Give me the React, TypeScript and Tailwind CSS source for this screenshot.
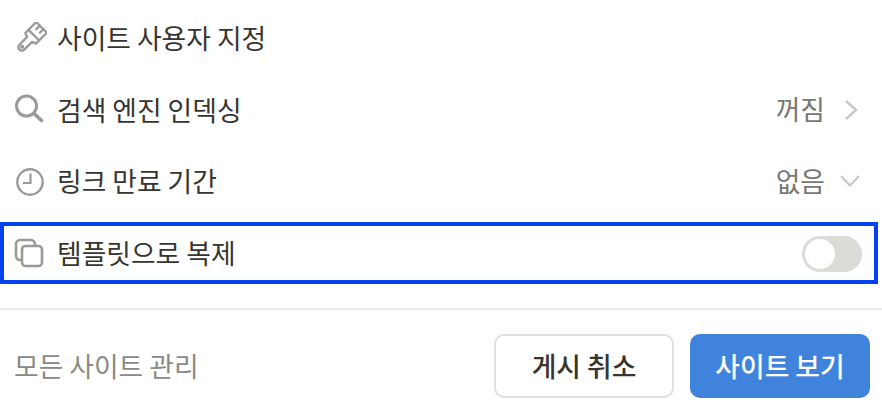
import React from "react";

function Row({ icon, label, right, className }: { icon: React.ReactNode; label: string; right?: React.ReactNode; className?: string }) {
  return (
    <div className={"flex items-center " + (className ?? "")}>
      <div className="w-[58px] shrink-0 flex justify-center pl-[4px]">{icon}</div>
      <div className="flex-1 text-[26.8px] leading-[36px] text-[#37352f] -ml-[1px]">{label}</div>
      {right}
    </div>
  );
}

const Brush = (
  <svg width="32" height="32" viewBox="0 0 32 32" fill="none" stroke="#9b9a97" strokeWidth="2.3" strokeLinejoin="round" strokeLinecap="round">
    <g transform="rotate(45 16 16)">
      <path d="M8.5 1 H23.5 V12 H8.5 Z" />
      <path d="M13.5 1 V6 M18.5 1 V6" />
      <path d="M8.5 12 V16.5 L12.5 18 V29 A3.5 3.5 0 0 0 19.5 29 V18 L23.5 16.5 V12" />
      <circle cx="16" cy="28.5" r="1" />
    </g>
  </svg>
);
const Search = (
  <svg width="30" height="30" viewBox="2 1.5 30 30" fill="none" stroke="#9b9a97" strokeWidth="3" strokeLinecap="round" className="overflow-visible">
    <circle cx="12.5" cy="12.5" r="10" />
    <path d="M20 20 L27.5 27" strokeWidth="3.6" />
  </svg>
);
const Clock = (
  <svg width="30" height="30" viewBox="1 -1 30 30" fill="none" stroke="#9b9a97" strokeWidth="2.4" className="overflow-visible">
    <circle cx="15" cy="15" r="12.7" />
    <path d="M15.5 6.5 V16 H8" strokeWidth="2.2" />
  </svg>
);
const Copy = (
  <svg width="30" height="30" viewBox="1 0 30 30" fill="none" stroke="#9b9a97" strokeWidth="2.6" strokeLinejoin="round" className="overflow-visible">
    <path d="M7 22 H6 A4 4 0 0 1 2 18 V6 A4 4 0 0 1 6 2 H17 A4 4 0 0 1 21 6 V7" />
    <rect x="8" y="8" width="20" height="20" rx="3.5" />
  </svg>
);

export default function App() {
  return (
    <div className="w-[882px] h-[410px] bg-white overflow-hidden flex flex-col" style={{ fontFamily: '"Noto Sans CJK KR", "Noto Sans", sans-serif' }}>
      <div className="pt-[2px] pr-[24px] flex flex-col">
        <Row icon={Brush} label="사이트 사용자 지정" className="h-[72px]" />
        <Row
          icon={Search}
          label="검색 엔진 인덱싱"
          className="h-[71px]"
          right={
            <div className="flex items-center gap-[19px] text-[26.8px] text-[#787774]">
              <span>꺼짐</span>
              <svg width="14" height="22" viewBox="0 0 14 22" fill="none" stroke="#c9c8c5" strokeWidth="2.4">
                <path d="M2 2 L12 11 L2 20" />
              </svg>
            </div>
          }
        />
        <Row
          icon={Clock}
          label="링크 만료 기간"
          className="h-[72px]"
          right={
            <div className="flex items-center gap-[15px] text-[26.8px] text-[#787774]">
              <span>없음</span>
              <svg width="20" height="12" viewBox="0 0 20 12" fill="none" stroke="#c9c8c5" strokeWidth="2.2" className="mr-[-2px]">
                <path d="M1 1 L10 10.5 L19 1" />
              </svg>
            </div>
          }
        />
      </div>
      <div className="mt-[5px] w-[878px] h-[62px] border-[4px] border-[#0442ee] flex items-center">
        <div className="flex-1 pr-[12px]">
          <Row
            icon={<div className="-ml-[2px]">{Copy}</div>}
            label="템플릿으로 복제"
            className="-ml-[4px]"
            right={
              <div className="w-[60px] h-[36px] mt-[2px] rounded-full bg-[#dcdbd8] p-[3px] flex items-center">
                <div className="w-[30px] h-[30px] rounded-full bg-white" />
              </div>
            }
          />
        </div>
      </div>
      <div className="mt-[24px] border-t-2 border-[#ededec] pt-[24px] pl-[14px] pr-[12px] flex items-center">
        <div className="flex-1 text-[26.8px] text-[#8a8986]">모든 사이트 관리</div>
        <button className="w-[180px] h-[64px] rounded-[10px] border-2 border-[#e0e0df] bg-white text-[26.8px] font-medium text-[#37352f]">게시 취소</button>
        <button className="ml-[16px] w-[180px] h-[64px] rounded-[10px] bg-[#3f83dd] text-[26.8px] font-medium text-white">사이트 보기</button>
      </div>
    </div>
  );
}
